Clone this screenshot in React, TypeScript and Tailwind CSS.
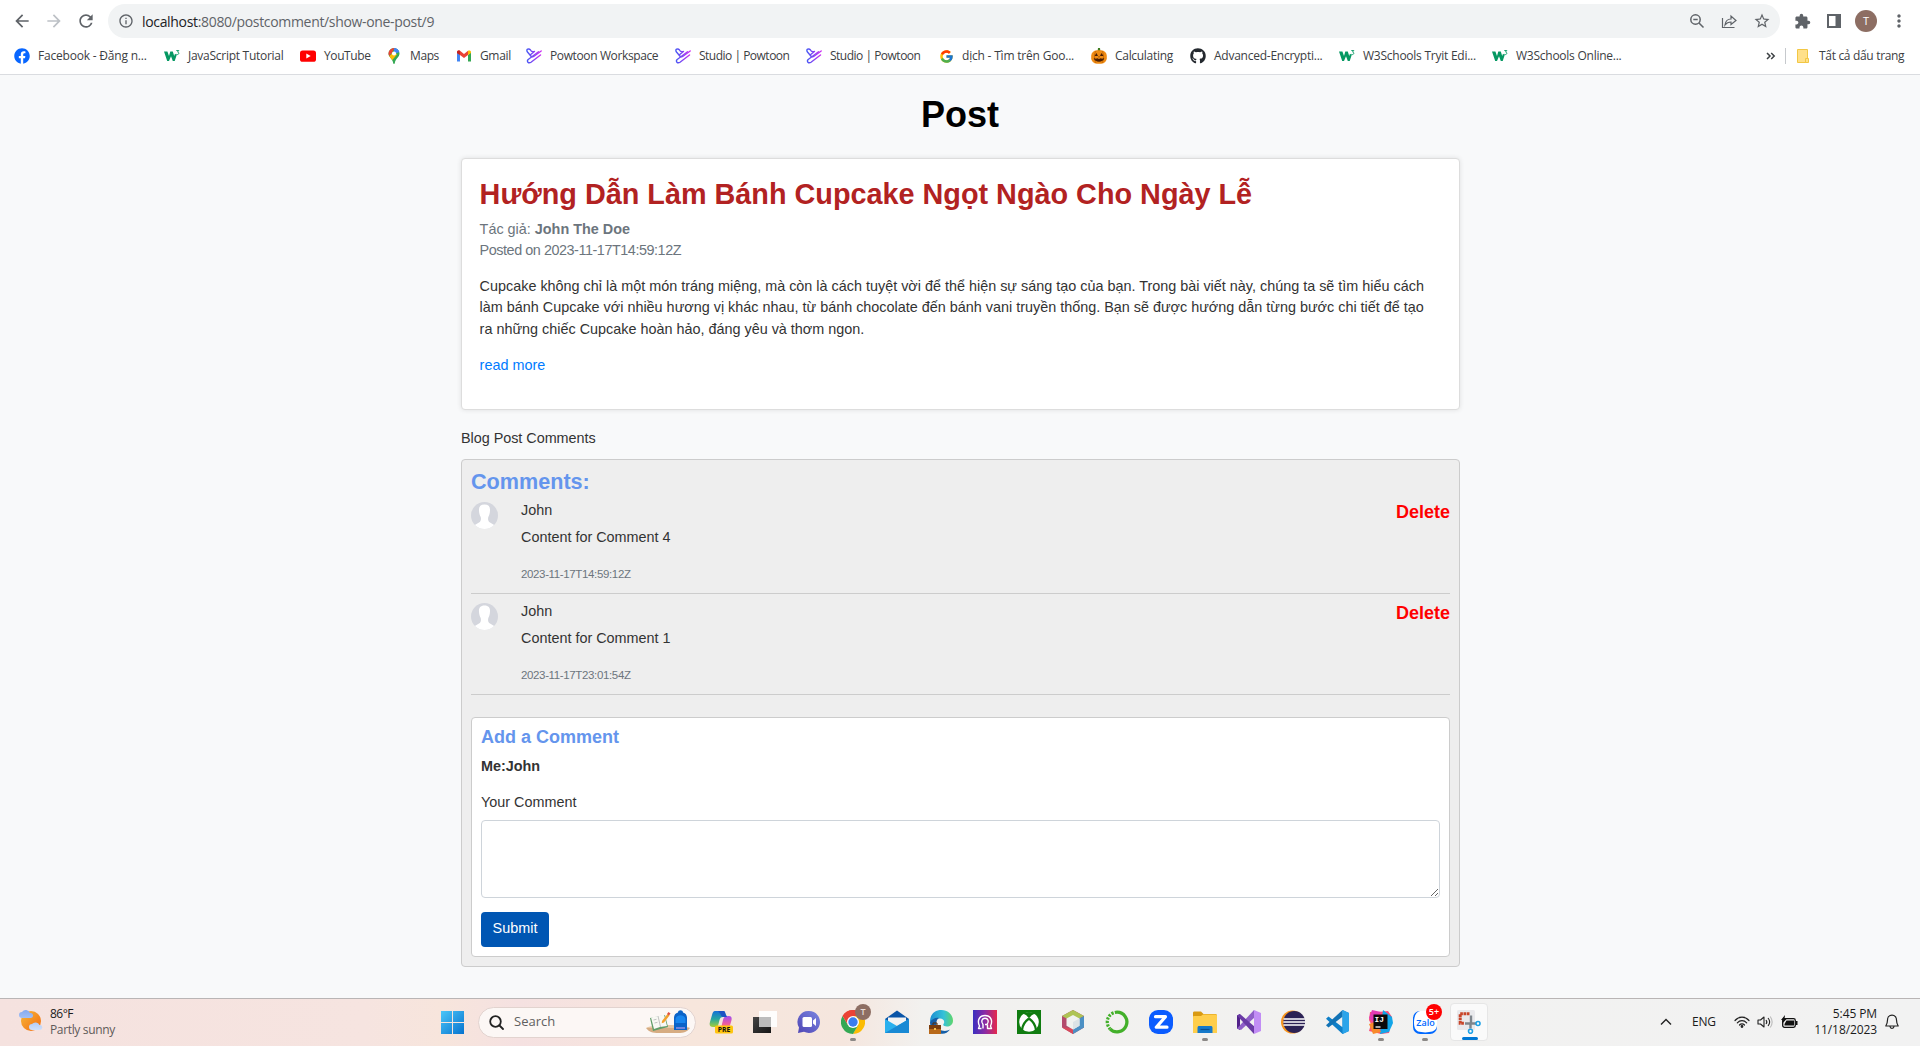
import React from "react";
import { FaGithub, FaFacebook } from "react-icons/fa";
import { FcGoogle } from "react-icons/fc";
import { MdExtension, MdStarBorder, MdMoreVert, MdArrowBack, MdArrowForward, MdRefresh, MdInfoOutline } from "react-icons/md";

const W3 = () => (
  <svg viewBox="0 0 16 16" className="size-4">
    <path d="M0 3.500h3.400L5 8l1.300-4.500h2.500L10.200 8l.8-2.300 1.700 1.400L10.700 13H8.800L7 8.300 5 13H3.200z" fill="#059862" />
    <path d="M12.300 2.500h2.500L13.500 4c1.800 0 1.800 2.600-.2 2.600-.6 0-1-.2-1.200-.5" fill="none" stroke="#059862" strokeWidth=".9" />
  </svg>
);
const YouTube = () => (
  <svg viewBox="0 0 16 16" className="size-4">
    <rect y="2.4" width="16" height="11.4" rx="2.6" fill="#f00" />
    <path d="m6.3 5.6 4.4 2.5-4.4 2.5z" fill="#fff" />
  </svg>
);
const Maps = () => (
  <svg viewBox="0 0 16 16" className="size-4">
    <clipPath id="pin"><path d="M8 0a5.5 5.5 0 0 0-5.5 5.6C2.500 9.300 6.600 10.500 7.200 15.200c.2 1 1.400 1 1.600 0C9.400 10.500 13.500 9.300 13.500 5.600A5.500 5.500 0 0 0 8 0z" /></clipPath>
    <g clipPath="url(#pin)">
      <path d="M0 0h16v16H0z" fill="#34a853" />
      <path d="M7 0h9v3.500L10 5z" fill="#4285f4" />
      <path d="m2 9.500 6-6 3 3-6 7z" fill="#fbbc04" />
      <path d="M8 0h6l-1 3-5 4z" fill="#4285f4" />
      <path d="M0 0h8.500L6 5 2 9z" fill="#ea4335" />
    </g>
    <circle cx="8" cy="5.500" r="2.100" fill="#fff" />
  </svg>
);
const Gmail = () => (
  <svg viewBox="0 0 16 16" className="size-4">
    <path d="M1 4v9.500h3V7z" fill="#4285f4" />
    <path d="M15 4v9.500h-3V7z" fill="#34a853" />
    <path d="M1 4c0-1.500 1.700-2 3-1.200L8 6l4-3.200V7L8 10 4 7 1 5z" fill="#ea4335" />
    <path d="M12 2.800c1.300-.8 3-.3 3 1.200v1L12 7z" fill="#fbbc04" />
    <path d="M1 4c0-1.500 1.700-2 3-1.200V7L1 5z" fill="#c5221f" />
  </svg>
);
const Powtoon = () => (
  <svg viewBox="0 0 16 16" className="size-4">
    <linearGradient id="pw" gradientUnits="userSpaceOnUse" x1="0" y1="0" x2="16" y2="0"><stop stopColor="#3d5af5" /><stop offset="1" stopColor="#d42cf0" /></linearGradient>
    <g fill="none" stroke="url(#pw)" strokeWidth="1.400" strokeLinecap="round" strokeLinejoin="round">
      <path d="M15.200 3 8 8.300C6.500 9.500 5 8.500 4 7L1.500 4C-.5 1 3 .2 4.300 1.800 5.500 4.500 7 4 8.500 3.500L5 6.300" />
      <path d="M14.500 7 5 14.200C2.500 16 .2 13.200 2.200 11.500L12.500 3.800" />
    </g>
  </svg>
);
const Pumpkin = () => (
  <svg viewBox="0 0 16 16" className="size-4">
    <path d="M7 0h2l.5 4h-3z" fill="#3f7d20" />
    <rect x=".2" y="2.300" width="15.600" height="13.400" rx="5.500" fill="#ef8b13" />
    <path d="M5 3c-2 3-2 9 0 12M11 3c2 3 2 9 0 12" stroke="#c96a08" fill="none" />
    <path d="m3.500 8 2-3 1.500 3zM9 8l1.500-3 2 3zM2.800 10l2 .8 1.600-.6 1.600.8 1.600-.8 1.600.6 2-.8c-.5 5-9.800 5-10.400 0zM7.300 9.200 8 8l.7 1.200z" fill="#4a1f05" />
  </svg>
);

const bookmarks = [
  { icon: <FaFacebook className="size-4 text-[#0866ff]" />, label: "Facebook - Đăng n...", box: "w-[150px] tracking-[-0.2px]" },
  { icon: <W3 />, label: "JavaScript Tutorial", box: "w-[136px] tracking-[-0.27px]" },
  { icon: <YouTube />, label: "YouTube", box: "w-[86px] tracking-[-0.4px]" },
  { icon: <Maps />, label: "Maps", box: "w-[70px] tracking-[-0.4px]" },
  { icon: <Gmail />, label: "Gmail", box: "w-[70px] tracking-[-0.35px]" },
  { icon: <Powtoon />, label: "Powtoon Workspace", box: "w-[149px] tracking-[-0.38px]" },
  { icon: <Powtoon />, label: "Studio | Powtoon", box: "w-[131px] tracking-[-0.5px]" },
  { icon: <Powtoon />, label: "Studio | Powtoon", box: "w-[132px] tracking-[-0.5px]" },
  { icon: <FcGoogle className="size-[15px]" />, label: "dịch - Tìm trên Goo...", box: "w-[153px] tracking-[-0.2px]" },
  { icon: <Pumpkin />, label: "Calculating", box: "w-[99px] tracking-[-0.3px]" },
  { icon: <FaGithub className="size-4 text-[#24292f]" />, label: "Advanced-Encrypti...", box: "w-[149px] tracking-[-0.25px]" },
  { icon: <W3 />, label: "W3Schools Tryit Edi...", box: "w-[153px] tracking-[-0.25px]" },
  { icon: <W3 />, label: "W3Schools Online...", box: "w-[150px] tracking-[-0.25px]" },
];

function Browser() {
  return (
    <header className="h-[75px] shrink-0 border-b border-[#dadce0] bg-white font-['Open_Sans','Noto_Sans',sans-serif] text-[#3c4043]">
      <div className="flex h-[42px] items-center pl-3 text-[#5f6368]">
        <MdArrowBack className="size-5" />
        <MdArrowForward className="ml-3 size-5 text-[#bdc1c6]" />
        <MdRefresh className="ml-3 size-5" />
        <div className="ml-3 flex h-[34px] w-[1672px] items-center rounded-full bg-[#f1f3f4] pl-2.5">
          <MdInfoOutline className="size-4" />
          <span className="ml-2 whitespace-nowrap text-[14px] tracking-[-0.33px]"><span className="text-[#202124]">localhost</span>:8080/postcomment/show-one-post/9</span>
          <div className="ml-auto mr-[11px] flex items-center gap-4">
            <svg viewBox="0 0 16 16" className="size-4" fill="none" stroke="currentColor" strokeWidth="1.500"><circle cx="6.500" cy="6.500" r="4.700" /><path d="m10 10 4.500 4.500M4.300 6.500h4.400" /></svg>
            <svg viewBox="0 0 16 16" className="size-4" fill="none" stroke="currentColor" strokeWidth="1.200"><path d="M1.500 5v9.500h12M4 12c.5-4 3-6 6-6V3l5 4.500-5 4V9c-3 0-4.500 1-6 3z" /></svg>
            <MdStarBorder className="-mr-0.5 size-[18px]" />
          </div>
        </div>
        <MdExtension className="ml-3.5 size-[17px]" />
        <svg viewBox="0 0 14 14" className="ml-4 size-3.5"><path d="M1 1h12v12H1z" fill="none" stroke="currentColor" strokeWidth="2" /><path d="M8.500 1H13v12H8.500z" fill="currentColor" /></svg>
        <div className="ml-3.5 flex size-[22px] items-center justify-center rounded-full bg-[#8d6e63] text-[11px] text-white">T</div>
        <MdMoreVert className="ml-3 size-5" />
      </div>
      <div className="flex h-7 items-center pl-3.5 text-[12px]">
        {bookmarks.map((b, i) => (
          <div key={i} className={"flex shrink-0 items-center " + b.box}>
            <span className="flex size-4 items-center justify-center">{b.icon}</span>
            <span className="ml-2 whitespace-nowrap">{b.label}</span>
          </div>
        ))}
        <svg viewBox="0 0 10 10" className="ml-[124px] size-2.5" fill="none" stroke="#3c4043" strokeWidth="1.500"><path d="M1 2 4 5 1 8M5.200 2l3 3-3 3" /></svg>
        <div className="ml-[9px] h-4 w-px bg-[#c6c9cd]" />
        <svg viewBox="0 0 12 14" className="ml-[11px] h-3.5 w-3"><path d="M.5.5h10v13H.5z" fill="#ffe08a" stroke="#f2c744" /><path d="M8.500 9.500h3v4h-3z" fill="#ffe08a" stroke="#f2c744" /></svg>
        <span className="ml-2.5 whitespace-nowrap tracking-[-0.32px]">Tất cả dấu trang</span>
      </div>
    </header>
  );
}

function Comment({ text, date }: { text: string; date: string }) {
  return (
    <div className="flex h-[101px] items-start border-b border-[#ccc]">
      <svg viewBox="0 0 27 27" className="mt-[9px] size-[27px] shrink-0">
        <clipPath id="av"><circle cx="13.500" cy="13.500" r="13.500" /></clipPath>
        <g clipPath="url(#av)">
          <path d="M0 0h27v27H0z" fill="#d4d6dd" />
          <path d="M13.500 2.500c-4 0-5.800 2.200-5.500 6 .1 3 .8 5 1.700 6.500.5 2 .2 4-.9 5L3 23.500V27h21v-3.500L18.200 20c-1.100-1-1.400-3-.9-5 .9-1.500 1.600-3.500 1.700-6.500.3-3.800-1.500-6-5.500-6z" fill="#fff" />
        </g>
      </svg>
      <div className="ml-[23px] mt-[7px] grow leading-[21.6px]">
        <p>John</p>
        <p className="mt-[5px]">{text}</p>
        <p className="mt-4 text-[11.5px] tracking-[-0.36px] text-[#6c757d]">{date}</p>
      </div>
      <button className="mt-[9px] text-[18px] font-bold leading-[21.6px] text-[#f00]">Delete</button>
    </div>
  );
}

/* ---------- taskbar icons, each drawn on a 24x24 grid ---------- */
const Ico = ({ children }: { children: React.ReactNode }) => (
  <svg viewBox="0 0 24 24" className="size-6">{children}</svg>
);

const Copilot = () => (
  <Ico>
    <linearGradient id="c1" x2="0" y2="1"><stop stopColor="#1570d8" /><stop offset=".5" stopColor="#27a6a0" /><stop offset="1" stopColor="#a5cf3a" /></linearGradient>
    <linearGradient id="c2" x2="0" y2="1"><stop stopColor="#a24df0" /><stop offset=".6" stopColor="#ee5ba0" /><stop offset="1" stopColor="#f79455" /></linearGradient>
    <path d="M6 1h8c2 0 2 1 2.500 3L18 7h-4c-2 0-3 1-3.500 3l-1 4c-.5 2-1 3-3 3H4c-3 0-4-2-3-5l2-7c.7-2.500 1.500-4 3-4z" fill="url(#c1)" />
    <path d="M19 6h1c3 0 3 3 2.300 5l-1.500 5c-.6 2-2 3-4 3H9c2 0 3-1 3.500-3l1.500-6c.6-2.500 2-4 5-4z" fill="url(#c2)" />
    <path d="M9 1h5c2 0 2 1 2.500 3L18 7h-4c-1 0-2-1-2.500-3z" fill="#1c53c4" />
    <rect x="6" y="15.500" width="18" height="8" rx="1.500" fill="#ffc50f" />
    <text x="15" y="22" fontSize="6.800" fontWeight="700" textAnchor="middle" fontFamily="Open Sans, sans-serif" fill="#111">PRE</text>
  </Ico>
);
const TaskView = () => (
  <Ico>
    <linearGradient id="tv" x2="1" y2="1"><stop stopColor="#444" /><stop offset="1" stopColor="#161616" /></linearGradient>
    <path d="M0 7h18v16H0z" fill="url(#tv)" />
    <path d="M6 1h18v16H6z" fill="#fff" opacity=".9" /><path d="M6 7h12v10H6z" fill="#bcbcbc" />
  </Ico>
);
const Chat = () => (
  <Ico>
    <linearGradient id="ch" x1="1" x2="0" y2="1"><stop stopColor="#7a86e0" /><stop offset="1" stopColor="#4f45b5" /></linearGradient>
    <path d="M12 1a11 11 0 1 1-5 20.800L1 23l1-5.500A11 11 0 0 1 12 1z" fill="url(#ch)" />
    <rect x="5.500" y="7" width="9.500" height="10" rx="1.500" fill="#fff" /><path d="m16 10.500 3-2.500v8l-3-2.500z" fill="#fff" />
  </Ico>
);
const Chrome = () => (
  <Ico>
    <path d="M12 12 1.600 6A12 12 0 0 1 22.400 6z" fill="#ea4335" /><path d="M12 6h10.400A12 12 0 0 1 12 24l5-9z" fill="#fbbc04" />
    <path d="M1.600 6A12 12 0 0 0 12 24l5.200-9H7z" fill="#34a853" /><path d="M1.600 6 7 15l5-9h10.400A12 12 0 0 0 1.600 6z" fill="#ea4335" />
    <circle cx="12" cy="12" r="6" fill="#fff" /><circle cx="12" cy="12" r="4.700" fill="#3b7ded" />
  </Ico>
);
const Mail = () => (
  <Ico>
    <path d="M0 9 12 .5 24 9v4H0z" fill="#0a55a8" /><path d="M3 7.500h18V14H3z" fill="#f3f3f3" />
    <path d="M0 9v14h24V9l-12 7z" fill="#29b0ee" /><path d="M0 23 24 9v14z" fill="#1889d4" />
  </Ico>
);
const Edge = () => (
  <Ico>
    <linearGradient id="ed"><stop stopColor="#1b8fd2" /><stop offset=".6" stopColor="#35c1d8" /><stop offset="1" stopColor="#5fd66a" /></linearGradient>
    <path d="M1 12C1 4 6 0 12.500 0 20 0 24 6 24 10.500c0 4-3 6-6 6-2.500 0-4.500-1-3.500-2.500 2-3-.5-5.500-3.500-5.500-4 0-7 2-10 3.500z" fill="url(#ed)" />
    <path d="M1 12c2-3 6-5 9-4-3 1-4 8 0 11 3 2.500 8 2.500 11 .5C18.500 23 15 24.500 11 23.500 5 22.500 1 18 1 12z" fill="#155fa8" />
    <path d="M0 15h12v9H0z" fill="#b8691a" /><path d="M0 15h12v4H0z" fill="#7a3d0e" /><path d="M4 15v-2h4v2" fill="none" stroke="#5b2c08" /><path d="M5 18h2v2H5z" fill="#f7c24a" />
  </Ico>
);
const Omen = () => (
  <Ico>
    <linearGradient id="om"><stop stopColor="#3b2fbf" /><stop offset=".5" stopColor="#8a2ba5" /><stop offset="1" stopColor="#e5294d" /></linearGradient>
    <path d="M0 0h24v24H0z" fill="url(#om)" />
    <g fill="none" stroke="#fff" strokeWidth="1.400" strokeLinejoin="round"><path d="M8.500 18.500H5.500l1-2.500C4 11 6 5.500 12 5.500s8 5.500 5.500 10.500l1 2.500h-4v-4" /><path d="M10 18.500v-4c-2.500-3-1-6.300 2-6.300s4.500 3.300 2 6.300h-2" /></g>
  </Ico>
);
const Xbox = () => (
  <Ico>
    <path d="M0 0h24v24H0z" fill="#107c10" /><circle cx="12" cy="12" r="9.800" fill="#fff" />
    <path d="M6 3.500Q10 5 12 8.500 14 5 18 3.500 12 .5 6 3.500z" fill="#107c10" />
    <path d="M12 8.500C8.500 11 5.500 15 5 20M12 8.500c3.500 2.500 6.500 6.500 7 11.500" fill="none" stroke="#107c10" strokeWidth="2.200" />
  </Ico>
);
const Cube = () => (
  <Ico>
    <path d="m12 0 11 6v11.500L12 24 1 17.500V6z" fill="#b34b6d" /><path d="m12 0 11 6-11 6L1 6z" fill="#aec455" />
    <path d="M23 6v11.500L12 24V12z" fill="#4c90c4" /><path d="m1 17.500 11 6.500v-6z" fill="#d84a5c" />
    <path d="m12 5 6.500 3.500v7.300L12 19.500l-6.500-3.700V8.500z" fill="#f0f2f0" /><path d="M12 12v7.500l6.500-3.700V8.500z" fill="#dce3e6" />
  </Ico>
);
const Anaconda = () => (
  <Ico>
    <path d="M12 2.200a9.800 9.800 0 1 1-7 16.600" fill="none" stroke="#43b02a" strokeWidth="3.300" />
    <path d="M12 2.200a9.800 9.800 0 0 0-7 16.600" fill="none" stroke="#43b02a" strokeWidth="3.200" strokeDasharray="2.200 1.300" />
  </Ico>
);
const ZApp = () => (
  <Ico>
    <rect width="24" height="24" rx="9" fill="#0b5cff" /><path d="M6.500 6.700h10L7.300 17.200H18" fill="none" stroke="#fff" strokeWidth="3.200" strokeLinejoin="round" strokeLinecap="round" />
  </Ico>
);
const Explorer = () => (
  <Ico>
    <path d="M0 3c0-1 .5-1.500 1.500-1.500H8L10.500 4H22c1.500 0 2 .5 2 2v8H0z" fill="#d99a12" />
    <path d="M0 7c0-.8.500-1 1-1h7l2-1.500h12.500c1 0 1.500.5 1.500 1.500v17H0z" fill="#ffce4b" />
    <path d="M4.500 23v-5c0-1.500.5-2 2-2h11c1.500 0 2 .5 2 2v5z" fill="#1679ca" /><path d="M7.500 19.500h9" stroke="#0b4f91" strokeWidth="1.200" />
  </Ico>
);
const VisualStudio = () => (
  <Ico>
    <path d="M0 5.500 3 4v16l-3-1.500z" fill="#52218a" /><path d="m17 0 1 7L4 20l-4-1.500z" fill="#8f5fc8" /><path d="m0 5.500 3-1.500 15 13-1 7z" fill="#6a3aa5" />
    <path d="m17 0 7 3v18l-7 3z" fill="#c28df5" />
  </Ico>
);
const Eclipse = () => (
  <Ico>
    <circle cx="11.500" cy="12" r="11.500" fill="#f7941e" /><circle cx="13.200" cy="12" r="10.900" fill="#2c2255" />
    <path d="M2.500 9h21.400M2.300 12h21.700M2.500 15h21.400" stroke="#fff" strokeWidth="1.500" />
  </Ico>
);
const VSCode = () => (
  <Ico>
    <path d="M17.500 0 24 3v18l-6.500 3L1 8.800 3.500 6.500 17.500 17.200z" fill="#0f7fc8" /><path d="M17.500 0v6.800L3.500 17.500 1 15.200z" fill="#1273b5" />
    <path d="m17.500 0 6.500 3v18l-6.500 3z" fill="#2ba4ea" />
  </Ico>
);
const IntelliJ = () => (
  <Ico>
    <path d="M1 2h8l10-1 4 6-3 16-8 1L0 21l2-7-2-4z" fill="#fc4f78" /><path d="m14 0 9 7 1 6-4 9-9 2z" fill="#12a5e8" />
    <path d="m0 14 4 10 8-2-6-10z" fill="#f88a2b" /><path d="M3 0 12 2 4 12 0 8z" fill="#e23bb4" />
    <path d="M4.500 4.500h14v14.500h-14z" fill="#0a0a0a" /><path d="M6.500 17h5" stroke="#fff" strokeWidth="1.300" />
    <text x="5.500" y="12" fontSize="7.800" fontWeight="700" fontFamily="Liberation Mono, monospace" fill="#fff">IJ</text>
  </Ico>
);
const Zalo = () => (
  <Ico>
    <rect y="1" width="24" height="23" rx="7" fill="#0068ff" /><path d="M7 1h10c5 0 7 2 7 7v7c0 4-3 7-8 7-4 1-8 0-11-.500C2 20 1 17 1 13 1 6 3 2 7 1z" fill="#fff" />
    <text x="12.500" y="15.500" fontSize="9" fontWeight="600" textAnchor="middle" fontFamily="Open Sans, sans-serif" fill="#0068ff">Zalo</text>
  </Ico>
);
const Snip = () => (
  <Ico>
    <rect width="18" height="20" rx="1.500" fill="#e9e9ec" /><path d="M12.500 3.700H3.200v9.500h4" fill="none" stroke="#c8452a" strokeWidth="3" strokeDasharray="2.700 .6" />
    <path d="M14 5.500v8h5M8 13.500h5.500v5" fill="none" stroke="#7e858c" strokeWidth="2.400" />
    <circle cx="21" cy="13.500" r="2" fill="none" stroke="#1da1e6" strokeWidth="1.600" /><circle cx="13.500" cy="21.300" r="2" fill="none" stroke="#1da1e6" strokeWidth="1.600" />
  </Ico>
);

const apps: { icon: React.ReactNode; badge?: string; badgeStyle?: string; open?: boolean }[] = [
  { icon: <Copilot /> }, { icon: <TaskView /> }, { icon: <Chat /> },
  { icon: <Chrome />, badge: "T", badgeStyle: "right-[4px] size-4 bg-[#8d6e63] text-[#e8dcd7]", open: true },
  { icon: <Mail /> }, { icon: <Edge /> }, { icon: <Omen /> }, { icon: <Xbox /> }, { icon: <Cube /> }, { icon: <Anaconda /> }, { icon: <ZApp /> },
  { icon: <Explorer />, open: true }, { icon: <VisualStudio /> }, { icon: <Eclipse /> }, { icon: <VSCode /> },
  { icon: <IntelliJ />, open: true },
  { icon: <Zalo />, badge: "5+", badgeStyle: "right-[5px] size-4 bg-[#f00] text-white", open: true },
];

function Taskbar() {
  return (
    <footer className="flex h-12 shrink-0 items-center border-t border-[#b9b5b5] bg-[linear-gradient(90deg,#f5e2df_0%,#f6e4e0_19%,#f7e5dc_23%,#f5e1e1_27%,#f7e6dc_36%,#f5e6de_44%,#f2f1ef_48%,#f2f2f2_100%)] pb-px font-['Open_Sans','Noto_Sans',sans-serif] text-[#1b1b1b]">
      <svg viewBox="0 0 24 22" className="mb-1 ml-[19px] h-[22px] w-6">
        <linearGradient id="sun" x2="1" y2="1"><stop stopColor="#f6b93a" /><stop offset="1" stopColor="#f36a10" /></linearGradient>
        <linearGradient id="cl" x2="0" y2="1"><stop stopColor="#85aaf0" /><stop offset="1" stopColor="#cfe0fb" /></linearGradient>
        <circle cx="12" cy="12" r="10" fill="url(#sun)" />
        <path d="M3 9a3 3 0 0 1 0-6 4.500 4.500 0 0 1 8 1 2.500 2.500 0 0 1 1 5zM13 21a3 3 0 0 1 0-6 4.500 4.500 0 0 1 7.500 1 2.500 2.500 0 0 1 .5 5z" fill="url(#cl)" />
      </svg>
      <div className="ml-[7px] w-[391px] text-[12px] leading-4">
        <p className="tracking-[-0.5px]">86°F</p>
        <p className="tracking-[-0.35px] text-[#5f5a59]">Partly sunny</p>
      </div>
      <svg viewBox="0 0 23 23" className="size-[23px]">
        <linearGradient id="wn" x2="1" y2="1"><stop stopColor="#4cc6f8" /><stop offset="1" stopColor="#0673cf" /></linearGradient>
        <path d="M0 0h11v11H0zM12 0h11v11H12zM0 12h11v11H0zM12 12h11v11H12z" fill="url(#wn)" />
      </svg>
      <div className="ml-3.5 flex h-[31px] w-[218px] items-center rounded-full border border-[#e2d3cf] bg-[#fcf7f5] pl-2.5">
        <svg viewBox="0 0 15 15" className="size-[15px]" fill="none" stroke="#222" strokeWidth="1.800" strokeLinecap="round"><circle cx="6.500" cy="6.500" r="5.300" /><path d="m10.500 10.500 3.500 3.500" /></svg>
        <span className="ml-2.5 text-[13px] text-[#606060]">Search</span>
        <svg viewBox="0 0 46 26" className="ml-auto mr-1 h-[26px] w-[46px]">
          <path d="M1 19h44c-3 4-6 5-12 5H14c-7 0-10-1-13-5z" fill="#d6ac82" /><path d="M1 19c5-4 39-4 44 0z" fill="#e7c7a5" />
          <path d="m5 9 15-3 3 12-15 4z" fill="#5f9c68" /><path d="m6 8.500 7-1.500 6-1.500 3 11.500-7 1-6 2z" fill="#f8f8f4" /><path d="m13 7 2.500 11M8.500 11l3-.7M9.500 14l3-.7" stroke="#aaa" strokeWidth=".7" />
          <path d="m17 12 5.500-7 2 1.500-5.500 7-2.300.8z" fill="#f3a12c" /><path d="m22 5 1.500-2 2 1.500L24 6.500z" fill="#e0503f" />
          <path d="M29 21V9c0-3 1.500-5 4-5.500 0-3 5-3 5 0 2.500.5 4 2.500 4 5.500v12z" fill="#0b63c8" /><path d="M30.500 10c1-5 9-5 10 0v4h-10z" fill="#1886ee" /><path d="M31 19h9" stroke="#d7a6f0" />
        </svg>
      </div>
      <div className="ml-[3px] flex items-center">
        {apps.map((a, i) => (
          <div key={i} className="relative flex h-[46px] w-11 items-center justify-center">
            {a.icon}
            {a.badge && <span className={"absolute top-[5px] flex items-center justify-center rounded-full text-[9px] font-semibold " + a.badgeStyle}>{a.badge}</span>}
            {a.open && <span className="absolute bottom-1 left-[19px] h-[3px] w-1.5 rounded-full bg-[#8b8886]" />}
          </div>
        ))}
      </div>
      <div className="relative ml-[3px] flex size-[38px] items-center justify-center rounded border border-[#e6e6e6] bg-[#fafafa]">
        <Snip />
        <span className="absolute bottom-0 left-[11px] h-[3px] w-4 rounded-full bg-[#0078d4]" />
      </div>
      <svg viewBox="0 0 12 8" className="ml-[172px] h-2 w-3" fill="none" stroke="#222" strokeWidth="1.400"><path d="m1 6.500 5-5 5 5" /></svg>
      <span className="ml-5 w-[42px] text-[12px] tracking-[-0.2px]">ENG</span>
      <svg viewBox="0 0 16 12" className="h-3 w-4" fill="none" stroke="#222" strokeWidth="1.200" strokeLinecap="round"><path d="M1 4.500c4-4.500 10-4.500 14 0M3.300 6.800c2.700-3 6.700-3 9.400 0M5.500 9c1.400-1.600 3.600-1.600 5 0" /><circle cx="8" cy="10.500" r=".8" fill="#222" /></svg>
      <svg viewBox="0 0 16 14" className="ml-[7px] h-3.5 w-4" fill="none" stroke="#222" strokeWidth="1.100" strokeLinejoin="round"><path d="M1 5v4h2.500L7 12V2L3.500 5zM9 5c1 1.200 1 2.800 0 4M11 3c2 2.400 2 5.600 0 8" /><path d="M13.200 1.500c2.500 3.500 2.500 7.500 0 11" stroke="#bbb" /></svg>
      <svg viewBox="0 0 17 14" className="ml-2 h-3.5 w-[17px]"><rect x="1.700" y="3.700" width="12.600" height="8.600" rx="1.800" fill="none" stroke="#111" strokeWidth="1.300" /><path d="M5.500 5.500H13v5H3.500V9zM15 6h1.500v4H15zM4 0 0 5h2L1 9l4.500-5h-2z" fill="#111" /></svg>
      <div className="ml-2 w-[71px] text-right text-[12px] leading-4 tracking-[-0.1px]"><p>5:45 PM</p><p>11/18/2023</p></div>
      <svg viewBox="0 0 14 16" className="ml-[8px] h-4 w-3.5" fill="none" stroke="#222" strokeWidth="1.200" strokeLinejoin="round"><path d="M7 1.200c-3 0-4.500 2-4.500 4.800 0 3-.5 4-1.700 6h12.400c-1.200-2-1.700-3-1.700-6C11.500 3.200 10 1.200 7 1.200zM5 12.500c.2 2.500 3.800 2.500 4 0" /></svg>
    </footer>
  );
}

export default function App() {
  return (
    <div className="flex h-[1046px] w-[1920px] flex-col overflow-hidden bg-[#f8f9fa]">
      <Browser />
      <main className="min-h-0 grow pt-[18px] font-['Liberation_Sans',Arial,sans-serif] text-[14.4px] leading-[21.6px] text-[#333]">
        <h1 className="text-center text-[36px] font-bold leading-[43px] text-black">Post</h1>
        <div className="ml-[461px] w-[999px]">
          <article className="mt-[22px] h-[252px] rounded-[4px] border border-[#ddd] bg-white px-[17.600px] py-[18px] shadow-[0_0_5px_rgba(0,0,0,0.1)]">
            <h2 className="text-[28.8px] font-bold leading-[34px] text-[#b22222]">Hướng Dẫn Làm Bánh Cupcake Ngọt Ngào Cho Ngày Lễ</h2>
            <div className="mt-[7.500px] text-[#6c757d]">
              <p>Tác giả: <b>John The Doe</b></p>
              <p className="tracking-[-0.45px]">Posted on 2023-11-17T14:59:12Z</p>
            </div>
            <p className="mt-[14px] whitespace-nowrap">
              Cupcake không chỉ là một món tráng miệng, mà còn là cách tuyệt vời để thể hiện sự sáng tạo của bạn. Trong bài viết này, chúng ta sẽ tìm hiểu cách<br />
              làm bánh Cupcake với nhiều hương vị khác nhau, từ bánh chocolate đến bánh vani truyền thống. Bạn sẽ được hướng dẫn từng bước chi tiết để tạo<br />
              ra những chiếc Cupcake hoàn hảo, đáng yêu và thơm ngon.
            </p>
            <a className="mt-[15px] block text-[#007bff]">read more</a>
          </article>
          <p className="mt-[18px] tracking-[-0.03px]">Blog Post Comments</p>
          <section className="mt-[9.400px] h-[508px] rounded-[4px] border border-[#ccc] bg-[#eee] p-[9px]">
            <h3 className="h-6 text-[21.6px] font-bold leading-[25px] text-[#6495ed]">Comments:</h3>
            <Comment text="Content for Comment 4" date="2023-11-17T14:59:12Z" />
            <Comment text="Content for Comment 1" date="2023-11-17T23:01:54Z" />
            <form className="mt-[22px] h-[240px] rounded-[4px] border border-[#ccc] bg-white px-[9px] pt-2">
              <h4 className="text-[18px] font-bold leading-[22px] text-[#6495ed]">Add a Comment</h4>
              <p className="mt-2 font-bold">Me:John</p>
              <label className="mt-[14.400px] block">Your Comment</label>
              <textarea className="mt-1.5 block h-[78px] w-full rounded-[4px] border border-[#ced4da] bg-white" />
              <button type="button" className="mt-3.5 block h-[35px] w-[68px] rounded-[4px] bg-[#0056b3] text-white">Submit</button>
            </form>
          </section>
        </div>
      </main>
      <Taskbar />
    </div>
  );
}
